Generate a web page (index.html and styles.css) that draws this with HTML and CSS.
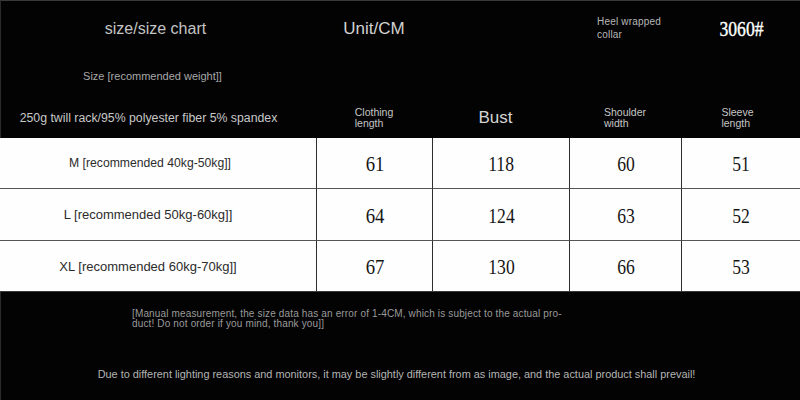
FILE: index.html
```html
<!DOCTYPE html>
<html lang="en">
<head>
<meta charset="utf-8">
<title>Size chart</title>
<link rel="stylesheet" href="styles.css">
</head>
<body>
<div class="page">
  <header class="head">
    <div class="hrow hrow-1">
      <div class="hcell title">size/size chart</div>
      <div class="hcell unit">Unit/CM</div>
      <div class="hcell"></div>
      <div class="hcell note">Heel wrapped<br>collar</div>
      <div class="hcell code"><span class="cond">3060#</span></div>
    </div>
    <div class="hrow hrow-2">
      <div class="hcell sub">Size [recommended weight]]</div>
    </div>
    <div class="hrow hrow-3">
      <div class="hcell fabric">250g twill rack/95% polyester fiber 5% spandex</div>
      <div class="hcell small">Clothing<br>length</div>
      <div class="hcell bust">Bust</div>
      <div class="hcell small">Shoulder<br>width</div>
      <div class="hcell small sleeve">Sleeve<br>length</div>
    </div>
  </header>

  <section class="table">
    <div class="cell label label-m">M [recommended 40kg-50kg]]</div>
    <div class="cell num"><span class="cond">61</span></div>
    <div class="cell num"><span class="cond">118</span></div>
    <div class="cell num"><span class="cond">60</span></div>
    <div class="cell num"><span class="cond">51</span></div>

    <div class="cell label">L [recommended 50kg-60kg]]</div>
    <div class="cell num"><span class="cond">64</span></div>
    <div class="cell num"><span class="cond">124</span></div>
    <div class="cell num"><span class="cond">63</span></div>
    <div class="cell num"><span class="cond">52</span></div>

    <div class="cell label">XL [recommended 60kg-70kg]]</div>
    <div class="cell num"><span class="cond">67</span></div>
    <div class="cell num"><span class="cond">130</span></div>
    <div class="cell num"><span class="cond">66</span></div>
    <div class="cell num"><span class="cond">53</span></div>
  </section>

  <footer class="foot">
    <p class="manual">[Manual measurement, the size data has an error of 1-4CM, which is subject to the actual pro-<br>duct! Do not order if you mind, thank you]]</p>
    <p class="light">Due to different lighting reasons and monitors, it may be slightly different from as image, and the actual product shall prevail!</p>
  </footer>
</div>
</body>
</html>
```

FILE: styles.css
```css
html, body {
  margin: 0;
  padding: 0;
  background: #030303;
}

body {
  font-family: "Liberation Sans", Arial, sans-serif;
  color: #c8c8c8;
}

.page {
  width: 800px;
  height: 400px;
  overflow: hidden;
  background: #030303;
}

.head {
  border-top: 1px solid #3a3a3a;
  border-left: 1px solid #2a2a2a;
}

.hrow {
  display: grid;
  grid-template-columns: 315px 116px 137px 112px 1fr;
}

.hrow-1 {
  height: 55px;
}

.hrow-2 {
  height: 36px;
}

.hrow-3 {
  height: 46px;
}

.hcell {
  display: flex;
  align-items: center;
  justify-content: center;
  text-align: center;
}

.title {
  font-size: 16px;
  color: #c4c4c4;
  padding-right: 6px;
}

.unit {
  font-size: 17px;
  color: #d2d2d2;
}

.note {
  justify-content: flex-start;
  text-align: left;
  padding-left: 28px;
  font-size: 10px;
  line-height: 13px;
  letter-spacing: 0.2px;
  color: #b8b8b8;
  padding-bottom: 2px;
}

.code {
  color: #ffffff;
  font-family: "Liberation Serif", "Times New Roman", serif;
  font-size: 22px;
  padding-left: 2px;
  -webkit-text-stroke: 0.4px #ffffff;
}

.code .cond {
  transform: scaleX(0.8);
}

.sub {
  font-size: 11px;
  color: #a8a8a8;
  padding-right: 12px;
  padding-top: 3px;
}

.hrow-3 .hcell {
  padding-top: 6px;
}

.fabric {
  font-size: 12.3px;
  color: #c8c8c8;
  padding-right: 20px;
}

.small {
  font-size: 10.5px;
  line-height: 11px;
  color: #c6c6c6;
  text-align: left;
}

.sleeve {
  padding-right: 6px;
}

.bust {
  font-size: 17px;
  color: #d4d4d4;
  padding-right: 10px;
}

.cond {
  display: inline-block;
  transform: scaleX(0.8);
  font-family: "Liberation Serif", "Times New Roman", serif;
}

.table {
  display: grid;
  grid-template-columns: 316px 116px 137px 112px 1fr;
  grid-template-rows: 50px 52px 51px;
  background: #fefefe;
}

.cell {
  display: flex;
  align-items: center;
  justify-content: center;
  border-left: 1px solid #2e2e2e;
  border-top: 1px solid #555;
}

.cell:nth-child(-n+5) {
  border-top: none;
}

.cell:nth-child(5n+1) {
  border-left: none;
}

.label {
  font-size: 13px;
  color: #2c2c2c;
  padding-right: 20px;
}

.label-m {
  font-size: 12.2px;
  padding-right: 16px;
}

.num {
  font-size: 22px;
  color: #151515;
  padding-top: 2px;
}

.num:nth-child(5n+2) .cond {
  transform: scaleX(0.85);
}

.foot {
  border-top: 1px solid #3a3a3a;
  border-left: 1px solid #2a2a2a;
  height: 108px;
}

.manual {
  margin: 0;
  padding: 17px 0 0 131px;
  font-size: 10px;
  line-height: 10px;
  color: #9a9a9a;
  letter-spacing: 0.15px;
}

.light {
  margin: 0;
  padding-top: 38px;
  padding-right: 8px;
  font-size: 10.9px;
  line-height: 14px;
  text-align: center;
  color: #b4b4b4;
}
```
